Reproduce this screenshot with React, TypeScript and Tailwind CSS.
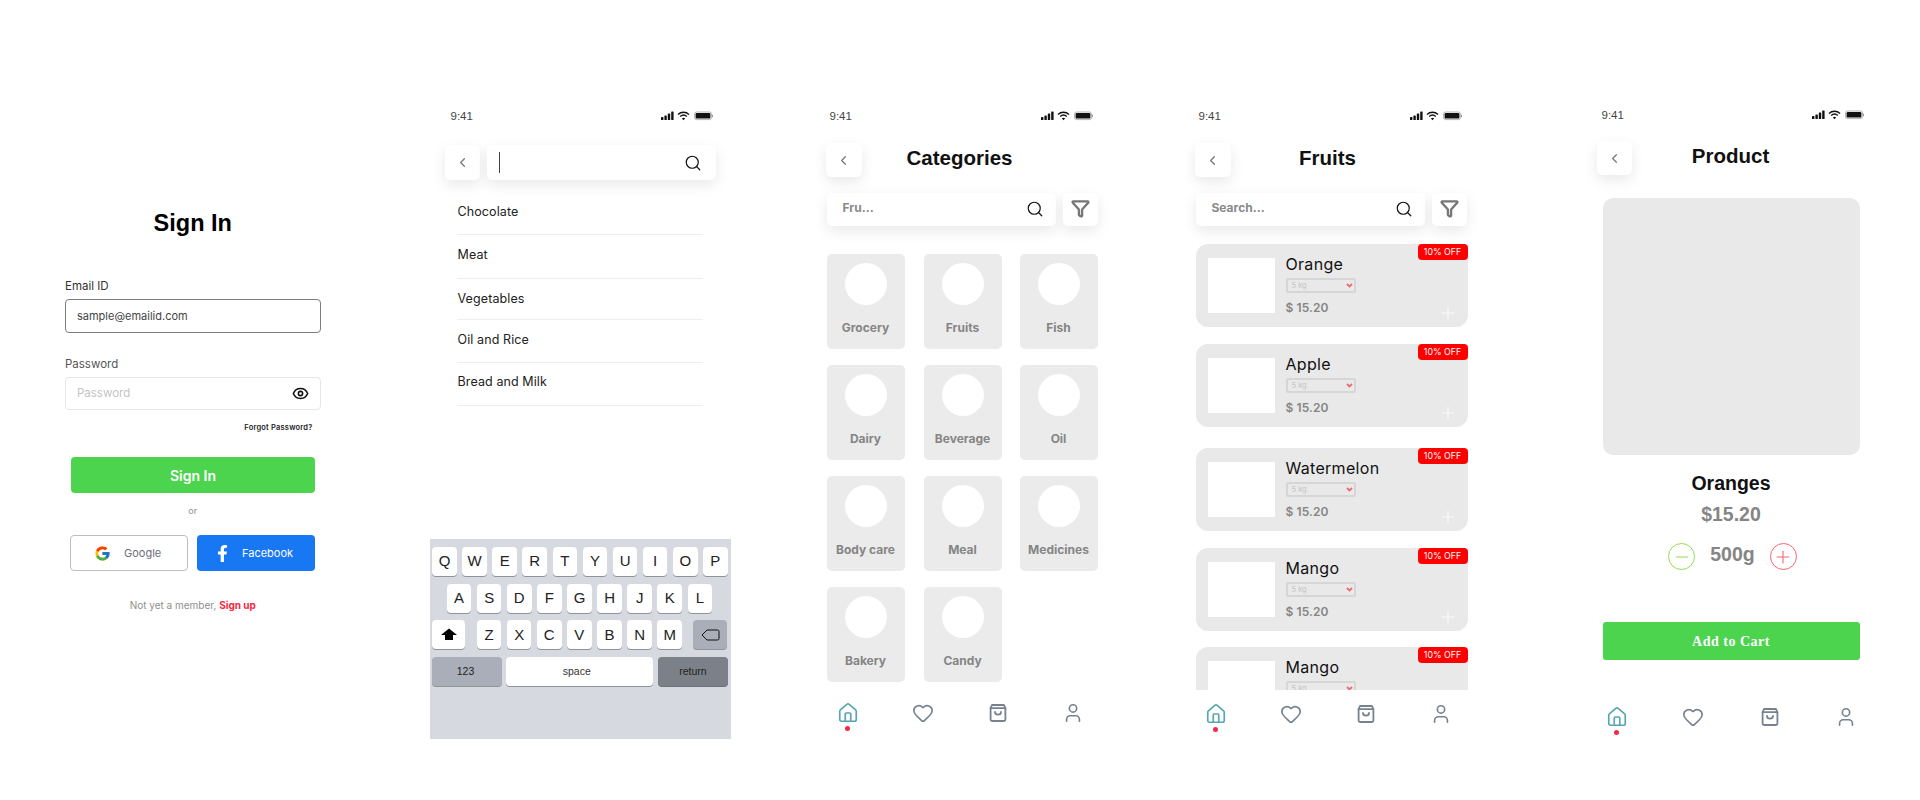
import { ChevronLeft, Eye, Funnel, Heart, House, Minus, Plus, Search, User } from "lucide-react";
import { FcGoogle } from "react-icons/fc";
import { FaFacebookF } from "react-icons/fa";

const arial = "font-['Liberation_Sans',Arial,sans-serif]";
const inter = "font-['Inter',sans-serif]";
const shadow = "shadow-[0_5px_14px_rgba(0,0,0,0.09)]";

function StatusBar({ className }: { className: string }) {
  return (
    <div className={`flex h-[14px] items-center justify-between ${className}`}>
      <span className={`${arial} mt-[2px] text-[11.5px] text-[#444]`}>9:41</span>
      <svg width="52" height="10" viewBox="0 0 52 10" fill="#111">
        <rect x="0" y="6" width="2.4" height="3" rx="0.6" />
        <rect x="3.4" y="4.5" width="2.4" height="4.5" rx="0.6" />
        <rect x="6.8" y="2.5" width="2.4" height="6.5" rx="0.6" />
        <rect x="10.2" y="0.5" width="2.4" height="8.5" rx="0.6" />
        <path d="M17 3.4a8 8 0 0 1 11 0" fill="none" stroke="#111" strokeWidth="1.4" />
        <path d="M19.2 5.5a5 5 0 0 1 6.6 0" fill="none" stroke="#111" strokeWidth="1.4" />
        <path d="M22.5 9.2l-1.6-1.8a2.3 2.3 0 0 1 3.2 0z" />
        <rect x="33.5" y="1" width="17" height="7.6" rx="2" fill="none" stroke="#999" strokeWidth="0.7" />
        <rect x="34.6" y="2" width="14.8" height="5.6" rx="1.2" />
        <rect x="51" y="3.6" width="1" height="2.6" rx="0.5" fill="#999" />
      </svg>
    </div>
  );
}

function BackButton({ className = "" }: { className?: string }) {
  return (
    <div className={`flex shrink-0 items-center justify-center rounded-[5px] bg-white ${shadow} ${className}`}>
      <ChevronLeft size={15} color="#777" strokeWidth={2} />
    </div>
  );
}

function SearchRow({ text, className }: { text: string; className: string }) {
  return (
    <div className={`mt-4 flex gap-[7px] ${className}`}>
      <div className={`flex h-[33px] w-[229px] items-center justify-between rounded-[5px] bg-white pb-[2px] pl-4 pr-[12px] ${shadow}`}>
        <span className={`${inter} -mt-[2px] text-[12px] font-bold text-[#8a8a8a]`}>{text}</span>
        <Search size={18} color="#111" strokeWidth={1.6} />
      </div>
      <div className={`flex h-[33px] w-[35px] items-center justify-center rounded-[5px] bg-white pb-[2px] ${shadow}`}>
        <Funnel size={19} color="#777" strokeWidth={3} />
      </div>
    </div>
  );
}

function BagIcon() {
  return (
    <svg width="22" height="22" viewBox="0 0 22 22" fill="none" stroke="#76828f" strokeWidth="1.8" strokeLinejoin="round" strokeLinecap="round">
      <path d="M5 3h12l1.4 3.2v11.3a1.5 1.5 0 0 1-1.5 1.5H5.1a1.5 1.5 0 0 1-1.5-1.5V6.2z" />
      <path d="M3.6 6.2h14.8" />
      <path d="M8 10c0 3.6 6 3.6 6 0" />
    </svg>
  );
}

function BottomNav({ className }: { className: string }) {
  return (
    <div className={`flex justify-between ${className}`}>
      <div className="flex w-[22px] flex-col items-center">
        <House size={22} color="#57a5b2" strokeWidth={1.8} />
        <div className="mt-[2px] h-[5px] w-[5px] rounded-full bg-[#f5274f]" />
      </div>
      <Heart size={22} color="#76828f" strokeWidth={1.8} />
      <BagIcon />
      <User size={22} color="#76828f" strokeWidth={1.8} />
    </div>
  );
}

function Key({ label }: { label: string }) {
  return (
    <div className={`flex h-[29px] w-[24.6px] items-center justify-center rounded-[4px] bg-white text-[15px] text-[#222] shadow-[0_1px_0_#8f939b] ${arial}`}>
      {label}
    </div>
  );
}

function Keyboard() {
  return (
    <div className="mt-[133px] flex h-[200px] w-[301px] flex-col gap-[7.7px] bg-[#d6d9e0] pt-2">
      <div className="flex gap-[5.5px] pl-[2.7px]">
        {"QWERTYUIOP".split("").map((k) => <Key key={k} label={k} />)}
      </div>
      <div className="flex gap-[5.5px] pl-[17.3px]">
        {"ASDFGHJKL".split("").map((k) => <Key key={k} label={k} />)}
      </div>
      <div className="flex pl-[2.7px]">
        <div className="flex h-[29px] w-[33px] items-center justify-center rounded-[4px] bg-white shadow-[0_1px_0_#8f939b]">
          <svg width="16" height="13" viewBox="0 0 16 13" fill="#000"><path d="M8 0.5L16 7h-4v5H4V7H0z" /></svg>
        </div>
        <div className="ml-[11.6px] flex gap-[5.5px]">
          {"ZXCVBNM".split("").map((k) => <Key key={k} label={k} />)}
        </div>
        <div className="ml-[11.5px] flex h-[29px] w-[34px] items-center justify-center rounded-[4px] bg-[#a9aeb9] shadow-[0_1px_0_#8f939b]">
          <svg width="19" height="12" viewBox="0 0 19 12" fill="none" stroke="#111" strokeWidth="1"><path d="M6 1h10.5a1.5 1.5 0 0 1 1.5 1.5v7a1.5 1.5 0 0 1-1.5 1.5H6L1 6z" /></svg>
        </div>
      </div>
      <div className={`flex gap-[4px] pl-[2px] text-[10.5px] ${arial}`}>
        <div className="flex h-[29px] w-[70px] items-center justify-center rounded-[4px] bg-[#a9aeb9] pr-[2px] text-[#222] shadow-[0_1px_0_#8f939b]">123</div>
        <div className="flex h-[29px] w-[147.5px] items-center justify-center rounded-[4px] bg-white pr-[5px] text-[#333] shadow-[0_1px_0_#8f939b]">space</div>
        <div className="ml-[1px] flex h-[29px] w-[70px] items-center justify-center rounded-[4px] bg-[#7c8088] text-[#222] shadow-[0_1px_0_#6d7078]">return</div>
      </div>
    </div>
  );
}

function SignIn() {
  return (
    <div className="ml-[65px] flex w-[255.5px] shrink-0 flex-col pt-[208px]">
      <h1 className={`${arial} h-[30px] text-center text-[23.5px] font-bold leading-[30px] text-black`}>Sign In</h1>
      <label className={`${inter} mt-10 h-4 text-[11.5px] leading-4 text-[#333]`}>Email ID</label>
      <div className={`${inter} mt-[5px] flex h-[34px] items-center rounded-[4px] border border-[#7d7d7d] pl-[11px] text-[11px] text-[#444]`}>sample@emailid.com</div>
      <label className={`${inter} mt-[23px] h-4 text-[11.5px] leading-4 text-[#555]`}>Password</label>
      <div className={`${inter} mt-[5px] flex h-[33px] items-center justify-between rounded-[4px] border border-[#e6e6e6] pl-[11px] pr-[11px] text-[11.5px] text-[#c4c4c4]`}>
        <span>Password</span>
        <Eye size={17} color="#111" strokeWidth={2.2} />
      </div>
      <div className={`${inter} mt-[13px] h-[10px] pr-[8px] text-right text-[7.5px] font-semibold leading-[10px] tracking-[0.2px] text-[#222]`}>Forgot Password?</div>
      <button className={`${inter} ml-[6px] mt-[24px] flex h-9 w-[244px] items-center justify-center rounded-[4px] bg-[#4dd44f] text-[14px] font-semibold text-white`}>Sign In</button>
      <div className={`${inter} mt-3 h-3 text-center text-[9px] leading-3 text-[#8f8f8f]`}>or</div>
      <div className="ml-[5px] mt-[18px] flex gap-[9px]">
        <div className={`${inter} flex h-9 w-[118px] items-center rounded-[4px] border border-[#bdbdbd] pl-[23px] text-[11px] text-[#6b6f7b]`}>
          <FcGoogle size={17} />
          <span className="ml-[13px]">Google</span>
        </div>
        <div className={`${inter} flex h-9 w-[118px] items-center rounded-[4px] bg-[#1877f2] pl-[17px] text-[11px] text-white`}>
          <FaFacebookF size={17} />
          <span className="ml-[11px]">Facebook</span>
        </div>
      </div>
      <div className={`${inter} mt-[27px] h-[14px] text-center text-[10px] leading-[14px] text-[#8f8f8f]`}>
        Not yet a member, <span className="font-bold text-[#f5273f]">Sign up</span>
      </div>
    </div>
  );
}

function SearchScreen() {
  const rows: [string, string][] = [
    ["Chocolate", "h-[45px] pb-0"],
    ["Meat", "h-[44px] pb-[2px]"],
    ["Vegetables", "h-[41px] pb-0"],
    ["Oil and Rice", "h-[43px] pb-[2px]"],
    ["Bread and Milk", "h-[43px] pb-[3px]"],
  ];
  return (
    <div className="ml-[109px] flex w-[301px] shrink-0 flex-col pt-[109px]">
      <StatusBar className="pl-[21px] pr-[18px]" />
      <div className="ml-[15px] mt-[22px] flex gap-[7px]">
        <BackButton className="h-[35px] w-[35px]" />
        <div className={`flex h-[35px] w-[229px] items-center justify-between rounded-[5px] bg-white pl-3 pr-[14px] ${shadow}`}>
          <div className="h-[21px] w-px bg-[#444]" />
          <Search size={18} color="#111" strokeWidth={1.6} />
        </div>
      </div>
      <div className="ml-[27px] mt-[10px] w-[246px]">
        {rows.map(([t, c]) => (
          <div key={t} className={`${inter} flex items-center border-b border-[#eeeeee] pl-px text-[12.5px] tracking-[0.1px] text-[#222] ${c}`}>{t}</div>
        ))}
      </div>
      <Keyboard />
    </div>
  );
}

function CategoryCard({ name }: { name: string }) {
  return (
    <div className="flex h-[95px] w-[78px] flex-col items-center rounded-[5px] bg-[#ebebeb] pt-[9px]">
      <div className="h-[42px] w-[42px] rounded-full bg-white" />
      <div className={`${inter} mt-[15px] text-[12px] font-bold leading-4 text-[#858585]`}>{name}</div>
    </div>
  );
}

function Categories() {
  const names = ["Grocery", "Fruits", "Fish", "Dairy", "Beverage", "Oil", "Body care", "Meal", "Medicines", "Bakery", "Candy"];
  return (
    <div className="ml-[95px] flex w-[272px] shrink-0 flex-col pt-[109px]">
      <StatusBar className="pl-[4px] pr-[5px]" />
      <div className="mt-5 flex items-center">
        <BackButton className="h-[34px] w-[36px]" />
        <div className={`${arial} -mt-[3px] w-[196px] text-center text-[20.5px] font-bold text-[#111]`}>Categories</div>
      </div>
      <SearchRow text="Fru..." className="ml-px" />
      <div className="ml-px mt-7 grid grid-cols-[97px_96px_78px] gap-y-4">
        {names.map((n) => <CategoryCard key={n} name={n} />)}
      </div>
      <BottomNav className="mt-[20px] pl-[11px] pr-[13px]" />
    </div>
  );
}

function FruitCard({ name, className }: { name: string; className: string }) {
  return (
    <div className={`relative flex h-[83px] shrink-0 rounded-xl bg-[#e9e9e9] pl-3 pt-[14px] ${className}`}>
      <div className="h-[55px] w-[67px] bg-white" />
      <div className="ml-[11px] flex flex-col">
        <div className={`${inter} -mt-[4px] h-5 text-[16px] leading-5 tracking-[0.3px] text-[#111]`}>{name}</div>
        <div className="mt-[4px] flex h-[15px] w-[70px] items-center justify-between rounded-[2px] border-2 border-[#d6d6d6] pl-1 pr-[1px]">
          <span className={`${inter} text-[7.5px] text-[#c4c4c4]`}>5 kg</span>
          <svg width="7" height="5" viewBox="0 0 7 5" fill="none" stroke="#ef6a75" strokeWidth="1.8"><path d="M1 1l2.5 2.5L6 1" /></svg>
        </div>
        <div className={`${inter} mt-[7px] text-[12px] font-semibold leading-4 tracking-[0.1px] text-[#858585]`}>$ 15.20</div>
      </div>
      <div className={`${inter} absolute right-0 top-0 flex h-4 w-[50px] items-center justify-center rounded-[4px] bg-[#ff0000] text-[8.8px] text-white`}>10% OFF</div>
      <Plus className="absolute bottom-[4px] right-[10px]" size={20} color="#ffffff" strokeWidth={1} />
    </div>
  );
}

function Fruits() {
  return (
    <div className="ml-[98px] flex w-[272px] shrink-0 flex-col pt-[109px]">
      <StatusBar className="pl-[3px] pr-[6px]" />
      <div className="mt-5 flex items-center">
        <BackButton className="-ml-px h-[34px] w-[36px]" />
        <div className={`${arial} -mt-[3px] w-[194px] text-center text-[20.5px] font-bold text-[#111]`}>Fruits</div>
      </div>
      <SearchRow text="Search..." className="" />
      <div className="mt-[18px] flex h-[446px] flex-col overflow-hidden">
        <FruitCard name="Orange" className="" />
        <FruitCard name="Apple" className="mt-[17px]" />
        <FruitCard name="Watermelon" className="mt-[21px]" />
        <FruitCard name="Mango" className="mt-[17px]" />
        <FruitCard name="Mango" className="mt-[16px]" />
      </div>
      <BottomNav className="mt-[13px] pl-[9px] pr-[15px]" />
    </div>
  );
}

function Product() {
  return (
    <div className="ml-[129px] flex w-[267px] shrink-0 flex-col pt-[108px]">
      <StatusBar className="pl-[5px] pr-0" />
      <div className="mt-[19px] flex items-center">
        <BackButton className="h-[34px] w-[35px]" />
        <div className={`${arial} -mt-[3px] w-[198px] text-center text-[20.5px] font-bold text-[#111]`}>Product</div>
      </div>
      <div className="ml-[6px] mt-[23px] h-[257px] w-[257px] rounded-[10px] bg-[#e9e9e9]" />
      <div className="ml-[6px] flex w-[257px] flex-col items-center">
        <div className={`${arial} mt-4 h-6 text-[19.5px] font-bold leading-6 text-[#111]`}>Oranges</div>
        <div className={`${arial} mt-[7px] h-6 text-[19.5px] font-bold leading-6 text-[#858585]`}>$15.20</div>
        <div className="ml-[3px] mt-[17px] flex h-[27px] items-center gap-[15px]">
          <div className="flex h-[27px] w-[27px] items-center justify-center rounded-full border-[1.5px] border-[#93dc4c]">
            <Minus size={20} color="#93dc4c" strokeWidth={1.3} />
          </div>
          <span className={`${arial} -mt-[3px] text-[19.5px] font-bold text-[#858585]`}>500g</span>
          <div className="flex h-[27px] w-[27px] items-center justify-center rounded-full border-[1.5px] border-[#f8656f]">
            <Plus size={20} color="#f8656f" strokeWidth={1.3} />
          </div>
        </div>
        <button className="mt-[52px] flex h-[38px] w-[257px] items-center justify-center rounded-[3px] bg-[#4dd44f] font-['Liberation_Serif',serif] text-[14px] font-bold tracking-[0.5px] text-white">Add to Cart</button>
      </div>
      <BottomNav className="mt-[46px] pl-[9px] pr-[6px]" />
    </div>
  );
}

export default function App() {
  return (
    <div className="flex h-[800px] w-[1920px] overflow-hidden bg-white">
      <SignIn />
      <SearchScreen />
      <Categories />
      <Fruits />
      <Product />
    </div>
  );
}
